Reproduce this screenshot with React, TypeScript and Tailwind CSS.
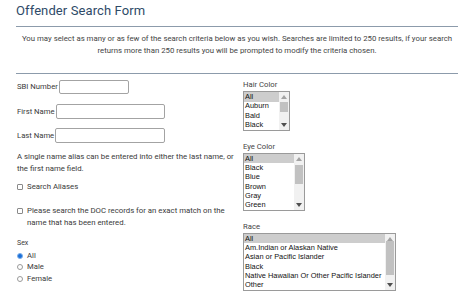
import React from "react";

function Scrollbar({ thumbTop, thumbH }: { thumbTop: number; thumbH: number }) {
  return (
    <div className="relative w-[10px] h-full bg-[#f1f1f1] shrink-0">
      <svg className="absolute left-[2px] top-[3px]" width="6" height="4" viewBox="0 0 6 4">
        <path d="M0 4 L3 0 L6 4 Z" fill="#a3a3a3" />
      </svg>
      <div className="absolute left-[1px] w-[8px] bg-[#c1c1c1]" style={{ top: thumbTop, height: thumbH }} />
      <svg className="absolute left-[2px] bottom-[3px]" width="6" height="4" viewBox="0 0 6 4">
        <path d="M0 0 L3 4 L6 0 Z" fill="#505050" />
      </svg>
    </div>
  );
}

function ListBox({
  items,
  w,
  h,
  rowH,
  thumbTop,
  thumbH,
}: {
  items: string[];
  w: number;
  h: number;
  rowH: number;
  thumbTop: number;
  thumbH: number;
}) {
  return (
    <div
      className="flex border border-[#9a9a9a] bg-white overflow-hidden font-['Liberation_Sans',Arial,sans-serif] text-[7.4px] text-[#111]"
      style={{ width: w, height: h }}
    >
      <div className="flex-1 flex flex-col overflow-hidden">
        {items.map((it, i) => (
          <div
            key={it}
            className={
              "pl-[1px] whitespace-nowrap flex items-center " + (i === 0 ? "bg-[#cdcdcd]" : "")
            }
            style={{ height: rowH }}
          >
            {it}
          </div>
        ))}
      </div>
      <Scrollbar thumbTop={thumbTop} thumbH={thumbH} />
    </div>
  );
}

function Check({ children }: { children: React.ReactNode }) {
  return (
    <div className="flex items-start">
      <span className="mt-[3px] w-[6px] h-[6px] border border-[#8a8a8a] rounded-[1px] bg-white shrink-0" />
      <span className="ml-[4px]">{children}</span>
    </div>
  );
}

function Radio({ label, checked }: { label: string; checked?: boolean }) {
  return (
    <div className="flex items-center h-[11.5px]">
      {checked ? (
        <span className="w-[6px] h-[6px] rounded-full bg-[#1a6fd8] border border-[#7fb0ea] shrink-0" />
      ) : (
        <span className="w-[6px] h-[6px] rounded-full border border-[#9a9a9a] bg-white shrink-0" />
      )}
      <span className="ml-[4px]">{label}</span>
    </div>
  );
}

export default function App() {
  return (
    <div className="w-[474px] h-[296px] bg-white overflow-hidden font-['Roboto',sans-serif] text-[#3a3a3a] text-[7.7px] leading-[12px]">
      <div className="px-[16px]">
        <div className="h-[26px] flex items-center pb-[4px]">
          <h1 className="text-[13px] leading-[14px] text-[#2e4a68] tracking-[0.1px]">Offender Search Form</h1>
        </div>
        <div className="h-px bg-[#8c9bab]" />
        <div className="pt-[6px] h-[46px] text-center text-[#444] text-[7.8px]">
          You may select as many or as few of the search criteria below as you wish. Searches are limited to 250 results, if your search
          <br />
          returns more than 250 results you will be prompted to modify the criteria chosen.
        </div>
        <div className="h-px bg-[#8c9bab]" />
      </div>

      <div className="flex">
        <div className="w-[243px] pl-[17px] flex flex-col">
          <div className="mt-[6px] flex items-center h-[14px]">
            <span className="mr-px">SBI Number</span>
            <span className="w-[70px] h-[14px] border border-[#a3a3a3] rounded-[2px] bg-white" />
          </div>
          <div className="mt-[10px] flex items-center h-[15px]">
            <span className="mr-px">First Name</span>
            <span className="w-[109px] h-[15px] border border-[#a3a3a3] rounded-[2px] bg-white" />
          </div>
          <div className="mt-[9px] flex items-center h-[15px]">
            <span className="mr-px">Last Name</span>
            <span className="w-[110px] h-[15px] border border-[#a3a3a3] rounded-[2px] bg-white" />
          </div>
          <p className="mt-[8px] text-[7.8px]">
            A single name alias can be entered into either the last name, or the first name field.
          </p>
          <div className="mt-[6px] text-[7.8px]">
            <Check>Search Aliases</Check>
          </div>
          <div className="mt-[12px] text-[7.8px] pr-[10px]">
            <Check>Please search the DOC records for an exact match on the name that has been entered.</Check>
          </div>
          <div className="mt-[8px] text-[7px]">Sex</div>
          <div className="mt-[1px]">
            <Radio label="All" checked />
            <Radio label="Male" />
            <Radio label="Female" />
          </div>
        </div>

        <div className="pl-[0px] flex flex-col text-[#444]">
          <div className="mt-[5px]">Hair Color</div>
          <ListBox items={["All", "Auburn", "Bald", "Black"]} w={47} h={40} rowH={9.5} thumbTop={10} thumbH={10} />
          <div className="mt-[10px]">Eye Color</div>
          <ListBox
            items={["All", "Black", "Blue", "Brown", "Gray", "Green"]}
            w={62}
            h={58}
            rowH={9.33}
            thumbTop={11}
            thumbH={19}
          />
          <div className="mt-[10px]">Race</div>
          <ListBox
            items={[
              "All",
              "Am.Indian or Alaskan Native",
              "Asian or Pacific Islander",
              "Black",
              "Native Hawaiian Or Other Pacific Islander",
              "Other",
            ]}
            w={153}
            h={58}
            rowH={9.33}
            thumbTop={7}
            thumbH={34}
          />
        </div>
      </div>
    </div>
  );
}
